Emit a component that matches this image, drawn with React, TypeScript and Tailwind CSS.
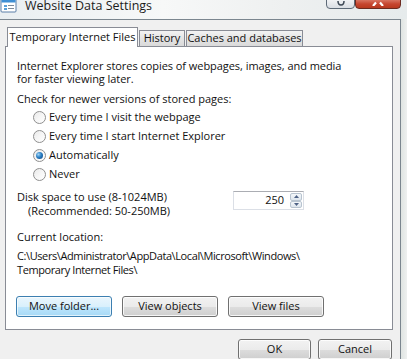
import React from 'react'

const FONT = "font-['Open_Sans','Noto_Sans',sans-serif]"

function Radio({ checked, label }: { checked?: boolean; label: string }) {
  return (
    <div className="flex h-[19px] items-center pl-[16px]">
      <span className="relative flex h-[13px] w-[13px] items-center justify-center rounded-full border border-[#8f8f8f] bg-gradient-to-br from-[#e9e9e9] via-[#f6f6f6] to-[#ffffff]">
        {checked && (
          <span className="h-[7px] w-[7px] rounded-full bg-[radial-gradient(circle_at_35%_35%,#9fd3f5_0%,#2a7fc4_45%,#0d3f7a_100%)]" />
        )}
      </span>
      <span className="ml-[3px]">{label}</span>
    </div>
  )
}

function Button({ label, width, active }: { label: string; width: string; active?: boolean }) {
  return (
    <div
      className={`${width} flex h-[21px] items-center justify-center rounded-[3px] border ${
        active
          ? 'border-[#3c7fb1] bg-[linear-gradient(#eaf6fd_0%,#d9f0fc_50%,#bee6fd_51%,#a7d9f5_100%)] shadow-[inset_0_0_0_1px_#ffffffaa]'
          : 'border-[#707070] bg-[linear-gradient(#f2f2f2_0%,#ebebeb_50%,#dddddd_51%,#cfcfcf_100%)] shadow-[inset_0_0_0_1px_#ffffffcc]'
      }`}
    >
      {label}
    </div>
  )
}

function Spinbox() {
  return (
    <div className="ml-[1px] mt-[1px] flex h-[19px] w-[71px] border border-[#dbdfe6] border-t-[#abadb3] bg-white">
      <div className="flex flex-1 items-center justify-end pr-[6px]">250</div>
      <div className="flex w-[13px] flex-col py-[1px] pr-[1px]">
        <div className="flex flex-1 items-center justify-center rounded-[2px] border border-[#b8c4d0] bg-[linear-gradient(#f4f7fa,#dde5ed)]">
          <svg width="5" height="3" viewBox="0 0 5 3">
            <path d="M0 3 L2.5 0 L5 3 Z" fill="#4d6185" />
          </svg>
        </div>
        <div className="flex flex-1 items-center justify-center rounded-[2px] border border-[#b8c4d0] bg-[linear-gradient(#f4f7fa,#dde5ed)]">
          <svg width="5" height="3" viewBox="0 0 5 3">
            <path d="M0 0 L2.5 3 L5 0 Z" fill="#4d6185" />
          </svg>
        </div>
      </div>
    </div>
  )
}

function TitleBar() {
  return (
    <div className="flex h-[19px] items-start bg-[linear-gradient(90deg,#e9eef1,#f7f8f8_40%,#eef0f0_70%,#e6ebec)]">
      <svg width="19" height="17" viewBox="0 0 19 17" className="-mt-[3px] shrink-0">
        <rect x="1" y="2" width="15" height="13" rx="1" fill="#ffffff" stroke="#5a7ea8" />
        <rect x="1.5" y="2.5" width="14" height="3" fill="#3f8fd4" />
        <rect x="4" y="8" width="3" height="2" fill="#5aa0d8" />
        <rect x="8" y="8" width="6" height="1" fill="#7d8b99" />
        <rect x="4" y="11" width="3" height="2" fill="#5aa0d8" />
        <rect x="8" y="11" width="6" height="1" fill="#7d8b99" />
      </svg>
      <div className="ml-[6px] -mt-[3px] text-[12.5px] leading-[17px] text-[#1c1c1c]">Website Data Settings</div>
      <div className="flex-1" />
      <div className="-mt-[3px] flex h-[12px] w-[29px] items-end justify-center rounded-b-[4px] border border-[#5d6a77] bg-[linear-gradient(#f6f7f8,#d9dee3)]">
        <svg width="8" height="5" viewBox="0 0 8 5" className="mb-[2px]">
          <path d="M1 0 Q1 4 4 4 Q7 4 7 0" fill="none" stroke="#3c4754" strokeWidth="1.5" />
        </svg>
      </div>
      <div className="-mt-[3px] mr-[6px] flex h-[12px] w-[46px] items-end justify-center rounded-b-[4px] border border-[#6b2a20] bg-[linear-gradient(#e08a7a,#c6452f_60%,#b8391f)]">
        <svg width="12" height="5" viewBox="0 0 12 5" className="mb-[2px]">
          <path d="M1 5 L4 1.5 M11 5 L8 1.5" stroke="#ffffff" strokeWidth="2.2" />
        </svg>
      </div>
    </div>
  )
}

export default function App() {
  return (
    <div className={`h-[359px] w-[407px] overflow-hidden bg-[#eceeed] ${FONT} text-[11px] text-[#111]`}>
      <TitleBar />
      <div className="flex">
        <div className="h-[340px] w-[401px] border-r border-t border-[#7b868f] bg-[#f0f0f0]">
          <div className="ml-[7px] mt-[7px] flex h-[19px] items-end">
            <div className="relative z-10 -mb-px flex h-[20px] w-[131px] items-center justify-center border border-b-0 border-[#898c95] bg-white pb-[1px]">
              Temporary Internet Files
            </div>
            <div className="ml-px flex h-[16px] w-[46px] items-center justify-center border border-b-0 border-[#898c95] bg-[linear-gradient(#f3f3f3,#e4e4e4_50%,#dadada)]">
              History
            </div>
            <div className="ml-px flex h-[16px] w-[117px] items-center justify-center border border-b-0 border-[#898c95] bg-[linear-gradient(#f3f3f3,#e4e4e4_50%,#dadada)]">
              Caches and databases
            </div>
          </div>
          <div className="ml-[5px] h-[284px] w-[388px] border border-[#898c95] bg-white pl-[11px] pt-[12px]">
            <div className="leading-[13px] tracking-[-0.05px]">
              Internet Explorer stores copies of webpages, images, and media
              <br />
              for faster viewing later.
            </div>
            <div className="mt-[7px] leading-[13px]">Check for newer versions of stored pages:</div>
            <div className="mt-[3px]">
              <Radio label="Every time I visit the webpage" />
              <Radio label="Every time I start Internet Explorer" />
              <Radio checked label="Automatically" />
              <Radio label="Never" />
            </div>
            <div className="mt-[6px] flex">
              <div className="w-[215px] leading-[14px]">
                Disk space to use (8-1024MB)
                <div className="pl-[11px]">(Recommended: 50-250MB)</div>
              </div>
              <Spinbox />
            </div>
            <div className="mt-[12px] leading-[14px]">Current location:</div>
            <div className="mt-[5px] leading-[13.5px] tracking-[-0.4px]">
              C:\Users\Administrator\AppData\Local\Microsoft\Windows\
              <br />
              Temporary Internet Files\
            </div>
            <div className="-ml-px mt-[20px] flex gap-[10px]">
              <Button active label="Move folder..." width="w-[96px]" />
              <Button label="View objects" width="w-[96px]" />
              <Button label="View files" width="w-[96px]" />
            </div>
          </div>
          <div className="mr-[8px] mt-[9px] flex justify-end gap-[7px]">
            <Button label="OK" width="w-[73px]" />
            <Button label="Cancel" width="w-[74px]" />
          </div>
        </div>
        <div className="flex-1 bg-[linear-gradient(90deg,#dfe4e2,#eef0ef)]" />
      </div>
    </div>
  )
}
